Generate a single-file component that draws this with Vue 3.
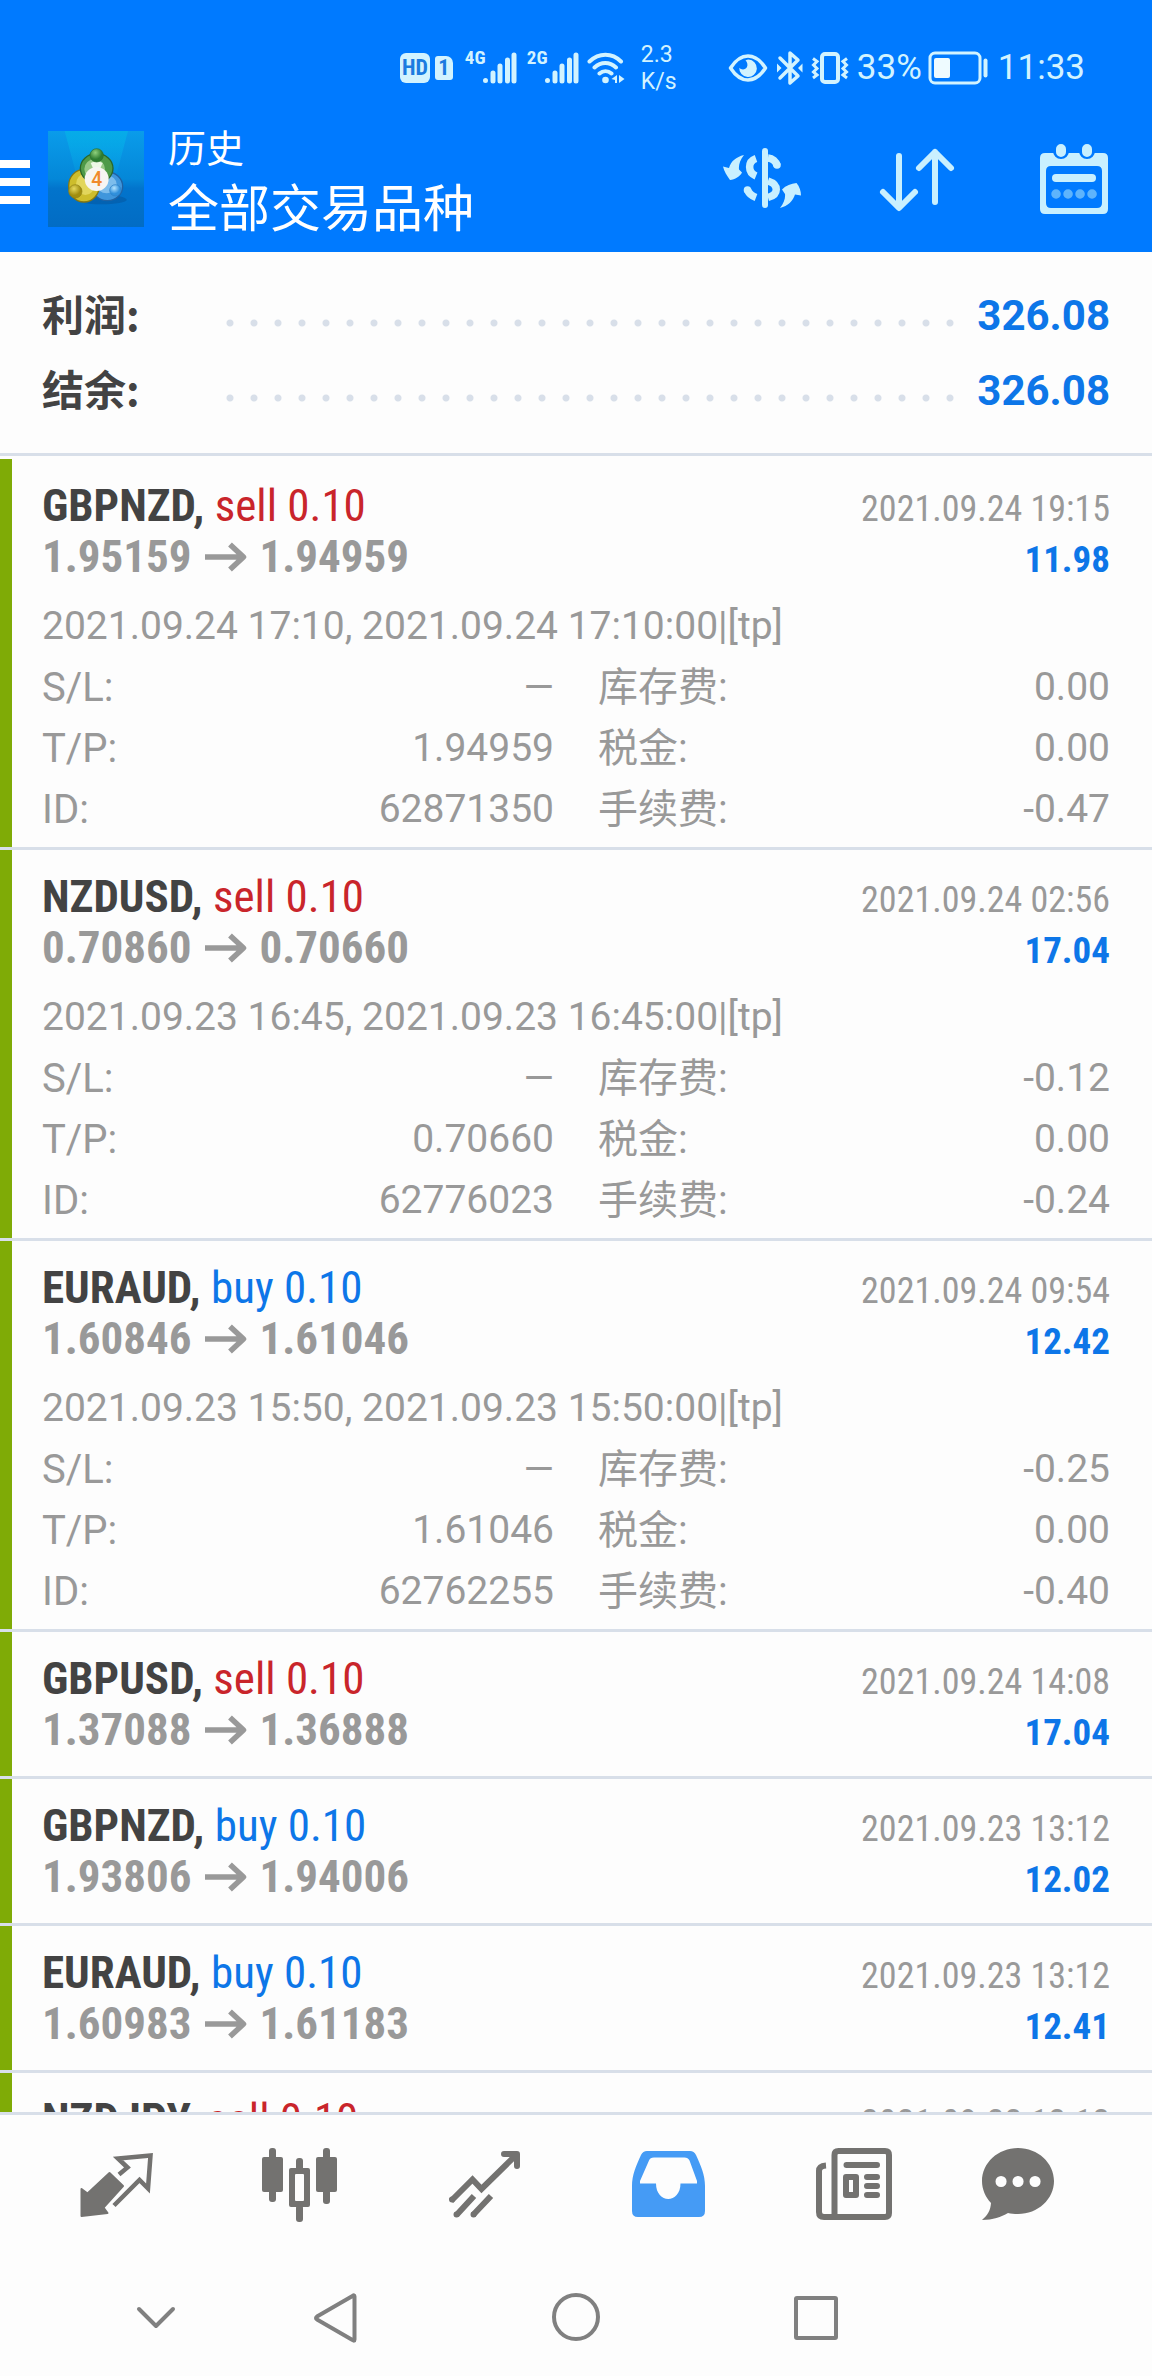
<script setup>
const summary = [
  { label: '利润:', value: '326.08' },
  { label: '结余:', value: '326.08' },
]

const deals = [
  {
    symbol: 'GBPNZD', side: 'sell', volume: '0.10', open: '1.95159', close: '1.94959',
    time: '2021.09.24 19:15', profit: '11.98',
    comment: '2021.09.24 17:10, 2021.09.24 17:10:00|[tp]',
    details: [['S/L:', '—'], ['库存费:', '0.00'], ['T/P:', '1.94959'], ['税金:', '0.00'], ['ID:', '62871350'], ['手续费:', '-0.47']],
  },
  {
    symbol: 'NZDUSD', side: 'sell', volume: '0.10', open: '0.70860', close: '0.70660',
    time: '2021.09.24 02:56', profit: '17.04',
    comment: '2021.09.23 16:45, 2021.09.23 16:45:00|[tp]',
    details: [['S/L:', '—'], ['库存费:', '-0.12'], ['T/P:', '0.70660'], ['税金:', '0.00'], ['ID:', '62776023'], ['手续费:', '-0.24']],
  },
  {
    symbol: 'EURAUD', side: 'buy', volume: '0.10', open: '1.60846', close: '1.61046',
    time: '2021.09.24 09:54', profit: '12.42',
    comment: '2021.09.23 15:50, 2021.09.23 15:50:00|[tp]',
    details: [['S/L:', '—'], ['库存费:', '-0.25'], ['T/P:', '1.61046'], ['税金:', '0.00'], ['ID:', '62762255'], ['手续费:', '-0.40']],
  },
  { symbol: 'GBPUSD', side: 'sell', volume: '0.10', open: '1.37088', close: '1.36888', time: '2021.09.24 14:08', profit: '17.04' },
  { symbol: 'GBPNZD', side: 'buy', volume: '0.10', open: '1.93806', close: '1.94006', time: '2021.09.23 13:12', profit: '12.02' },
  { symbol: 'EURAUD', side: 'buy', volume: '0.10', open: '1.60983', close: '1.61183', time: '2021.09.23 13:12', profit: '12.41' },
  { symbol: 'NZDJPY', side: 'sell', volume: '0.10', open: '77.460', close: '77.260', time: '2021.09.22 12:12', profit: '18.20' },
]
</script>

<template>
  <div class="screen">
    <header class="top">
      <div class="status">
        <span class="hd">HD</span>
        <span class="sim">1</span>
        <span class="net">4G</span>
        <svg class="bars" width="34" height="32" viewBox="0 0 34 32">
          <path d="M2.500 28.500v.1M10 21v8M17 14v15M24.500 8v21M31 3v26" />
        </svg>
        <span class="net second">2G</span>
        <svg class="bars" width="34" height="32" viewBox="0 0 34 32">
          <path d="M2.500 28.500v.1M10 21v8M17 14v15M24.500 8v21M31 3v26" />
        </svg>
        <svg class="wifi" width="38" height="32" viewBox="0 0 38 32">
          <g fill="none" stroke="#d2f3ff" stroke-width="4" stroke-linecap="round">
            <path d="M2.500 9.500C12 .5 25 .5 34 9.500M7.500 15.500c6.500-6 15-6 21.500 0M12.500 21.500c3.500-3 8.500-3 12 0" />
          </g>
          <circle cx="18.500" cy="28" r="3.300" fill="#d2f3ff" />
          <path d="M30 23v8h-2v-3l-3.500-1zM32 23v8l5.500-4z" fill="#d2f3ff" />
        </svg>
        <span class="speed">2.3<br />K/s</span>
        <svg class="eye" width="40" height="30" viewBox="0 0 40 30">
          <path d="M2.500 15C8 6.500 13.500 3 20 3s12 3.500 17.500 12C32 23.500 26.500 27 20 27S8 23.500 2.500 15z" fill="none" stroke="#d2f3ff" stroke-width="3.500" stroke-linejoin="round" />
          <path d="M20.500 6.500a8.800 8.800 0 1 1-9.200 8.200c2 2.500 6.200 2.300 7.700-.7 1-2.200.3-5.200-1.500-6.600 1-.6 2-.9 3-.9z" fill="#d2f3ff" />
        </svg>
        <svg class="bt" width="26" height="36" viewBox="0 0 26 36">
          <path d="M3 8l18 18-8 7V3l8 7L3 28" fill="none" stroke="#d2f3ff" stroke-width="3.500" stroke-linejoin="round" stroke-linecap="round" />
          <path d="M0 13.500v9l4.500-4.500zM25.500 13.500v9L21 18z" fill="#d2f3ff" />
        </svg>
        <svg class="vib" width="38" height="34" viewBox="0 0 38 34">
          <rect x="11" y="3" width="16" height="28" rx="3" fill="none" stroke="#d2f3ff" stroke-width="4" />
          <path d="M2 7.500l4 3-3.500 3.500L6 17.500 2.500 21 6 24l-4 3M36 7.500l-4 3 3.500 3.500-3.500 3.500 3.500 3.500-3.500 3 4 3" fill="none" stroke="#d2f3ff" stroke-width="3" />
        </svg>
        <span class="pct">33%</span>
        <svg class="battery" width="62" height="34" viewBox="0 0 62 34">
          <rect x="2" y="2" width="50" height="30" rx="5" fill="none" stroke="#d2f3ff" stroke-width="3" />
          <rect x="6" y="7" width="16" height="20" rx="2" fill="#eefbff" />
          <path d="M57.500 9.500v15" stroke="#d2f3ff" stroke-width="4" stroke-linecap="round" />
        </svg>
        <time class="clock">11:33</time>
      </div>

      <div class="appbar">
        <button class="menu" aria-label="菜单"><i></i><i></i><i></i></button>
        <svg class="logo" width="96" height="96" viewBox="0 0 288 288">
          <defs>
            <linearGradient id="tile" x1="0" y1="0" x2="0" y2="1">
              <stop offset="0" stop-color="#0a9cea" /><stop offset=".5" stop-color="#0487d8" /><stop offset=".6" stop-color="#0274cc" /><stop offset="1" stop-color="#026cc4" />
            </linearGradient>
            <linearGradient id="beam" x1="0" y1="0" x2="0" y2="1">
              <stop offset="0" stop-color="#06ace8" /><stop offset="1" stop-color="#06ace8" stop-opacity="0" />
            </linearGradient>
            <radialGradient id="green" cx=".4" cy=".3"><stop offset="0" stop-color="#8fd07c" /><stop offset="1" stop-color="#2f7d31" /></radialGradient>
            <radialGradient id="gold" cx=".4" cy=".3"><stop offset="0" stop-color="#e6d95e" /><stop offset="1" stop-color="#a08d10" /></radialGradient>
            <radialGradient id="blue" cx=".4" cy=".3"><stop offset="0" stop-color="#b5e4ff" /><stop offset="1" stop-color="#2f8fdb" /></radialGradient>
          </defs>
          <rect width="288" height="288" fill="url(#tile)" />
          <path d="M50 0h190l-40 150H90z" fill="url(#beam)" />
          <ellipse cx="160" cy="206" rx="76" ry="14" fill="#03549c" opacity=".5" />
          <ellipse cx="178" cy="166" rx="46" ry="43" fill="#3f96dc" stroke="#1f62a4" stroke-width="4" />
          <ellipse cx="176" cy="160" rx="30" ry="27" fill="#7dbdec" />
          <ellipse cx="108" cy="164" rx="46" ry="49" fill="#cdbd2c" stroke="#857812" stroke-width="4" />
          <ellipse cx="112" cy="160" rx="28" ry="32" fill="#e2d65c" />
          <ellipse cx="146" cy="112" rx="49" ry="44" fill="#4f9a48" stroke="#2a672a" stroke-width="4" />
          <ellipse cx="140" cy="114" rx="31" ry="30" fill="#97c987" />
          <path d="M128 96q18-10 36 0l-8 18h-20z" fill="#eef8e6" />
          <circle cx="146" cy="73" r="20" fill="url(#green)" stroke="#2b6e2e" stroke-width="2" />
          <circle cx="82" cy="181" r="20" fill="url(#gold)" stroke="#8f8115" stroke-width="2" />
          <circle cx="202" cy="178" r="17" fill="url(#blue)" stroke="#2c7fc6" stroke-width="2" />
          <circle cx="146" cy="144" r="36" fill="#f7f5f2" />
          <text x="146" y="165" text-anchor="middle" font-size="58" font-weight="500" fill="#f08a2c">4</text>
        </svg>
        <div class="titles">
          <p class="section">历史</p>
          <h1>全部交易品种</h1>
        </div>
        <button class="act" aria-label="货币">
          <svg width="80" height="80" viewBox="0 0 80 80">
            <path d="M43 13v54" stroke="#c9f0ff" stroke-width="6" stroke-linecap="round" />
            <path d="M34 20.500C25.500 23.500 25.500 34.500 34 38M46 20c4.500.5 8 3.500 9 7.500M46 43c11 3.500 11 13.500 0 16.500M25.500 52c1.500 3.500 4.500 6 8.500 7.500" fill="none" stroke="#c9f0ff" stroke-width="7.500" />
            <circle cx="55" cy="27" r="3.800" fill="#c9f0ff" /><circle cx="25.500" cy="52" r="3.800" fill="#c9f0ff" />
            <path d="M22 17c-4 5-5.500 10-5 14.500l3 3c-2 4-7 7-12 7.500C5 38 2 33 1 28.500l6 1.500C9 23 14 19 22 17zM58 70c4-5 5.500-10 5-14l-3-4.500c4-4 9-6 14.500-6.500C77.500 48.500 79 53 79 57.500l-6-1C71 63 66 68 58 70z" fill="#c9f0ff" />
          </svg>
        </button>
        <button class="act" aria-label="排序">
          <svg width="80" height="80" viewBox="0 0 80 80">
            <path d="M21 18v51M5 54l16 16 16-16M57 64V14M41 30l16-16 16 16" fill="none" stroke="#c9f0ff" stroke-width="6" stroke-linecap="round" stroke-linejoin="round" />
          </svg>
        </button>
        <button class="act" aria-label="日期">
          <svg width="80" height="80" viewBox="0 0 80 80">
            <path fill-rule="evenodd" d="M11 15h58q5 0 5 5v51q0 5-5 5H11q-5 0-5-5V20q0-5 5-5zM17 28q-5 0-5 5v32q0 5 5 5h46q5 0 5-5V33q0-5-5-5z" fill="#c9f0ff" />
            <path d="M27 11v2M53 11v2" stroke="#007aff" stroke-width="16" stroke-linecap="round" />
            <path d="M27 11v3M53 11v3" stroke="#c9f0ff" stroke-width="10" stroke-linecap="round" />
            <path d="M22 40h36" stroke="#c9f0ff" stroke-width="8" stroke-linecap="round" />
            <path d="M22 56h.1M34 56h.1M46 56h.1M58 56h.1" stroke="#5eb4fc" stroke-width="9.500" stroke-linecap="round" />
          </svg>
        </button>
      </div>
    </header>

    <dl class="summary">
      <div v-for="row in summary" :key="row.label" class="sum-row">
        <dt>{{ row.label }}</dt>
        <dd>{{ row.value }}</dd>
      </div>
    </dl>

    <ul class="deals">
      <li v-for="(deal, i) in deals" :key="i" class="deal">
        <div class="line">
          <h2>{{ deal.symbol }}, <span :class="deal.side">{{ deal.side }} {{ deal.volume }}</span></h2>
          <time>{{ deal.time }}</time>
        </div>
        <div class="line">
          <p class="prices">
            <span>{{ deal.open }}</span>
            <svg width="44" height="30" viewBox="0 0 44 30" role="img" aria-label="→">
              <path d="M1 15h38M26 2.500L39.500 15 26 27.500" fill="none" stroke="#999" stroke-width="5.500" stroke-linejoin="round" />
            </svg>
            <span>{{ deal.close }}</span>
          </p>
          <strong>{{ deal.profit }}</strong>
        </div>
        <template v-if="deal.details">
          <p class="comment">{{ deal.comment }}</p>
          <dl class="details">
            <div v-for="[label, value] in deal.details" :key="label">
              <dt>{{ label }}</dt>
              <dd>{{ value }}</dd>
            </div>
          </dl>
        </template>
      </li>
    </ul>

    <nav class="tabs">
      <button aria-label="行情">
        <svg width="80" height="80" viewBox="0 0 80 80">
          <path d="M33.500 28L47 41 27.500 62.500l4 5.500-26 3V44l6 4.500z" fill="#737270" stroke="#737270" stroke-width="2" stroke-linejoin="round" />
          <path d="M43 29.500l8.500-7-9.500-9 32.500-3L72 43.500 63.500 35 38 60.500" fill="none" stroke="#737270" stroke-width="4.500" />
        </svg>
      </button>
      <button aria-label="图表">
        <svg width="80" height="80" viewBox="0 0 80 80" fill="#737270">
          <rect x="2" y="12" width="21" height="35" rx="2" /><rect x="9" y="3" width="7" height="54" rx="3" />
          <path fill-rule="evenodd" d="M31 23h17q2 0 2 2v35q0 2-2 2H31q-2 0-2-2V25q0-2 2-2zM36 29q-1 0-1 1v25q0 1 1 1h7q1 0 1-1V30q0-1-1-1z" />
          <rect x="36" y="13" width="7" height="14" rx="3" /><rect x="36" y="60" width="7" height="17" rx="3" />
          <rect x="56" y="12" width="21" height="35" rx="2" /><rect x="63" y="3" width="7" height="56" rx="3" />
        </svg>
      </button>
      <button aria-label="交易">
        <svg width="80" height="80" viewBox="0 0 80 80" fill="none" stroke="#737270" stroke-width="6">
          <path d="M7 56l21.500-21.500 9 9.500L71 11" />
          <path d="M60 9h13v12" stroke-linecap="round" stroke-linejoin="round" />
          <path d="M30 51L12.500 70M47 51L29 70" />
          <path d="M8 54.500h.1M12.500 69.500h.1M29.500 69.500h.1" stroke-linecap="round" />
        </svg>
      </button>
      <button aria-label="历史" aria-current="page">
        <svg width="80" height="80" viewBox="0 0 80 80">
          <path fill-rule="evenodd" d="M19 6h43q4 0 6 4c5 11 9 20 9 31v25q0 6-6 6H10q-6 0-6-6V41c0-11 4-20 9-31q2-4 6-4zM26 12.500q-4 0-5 3L12 36v2.500h16c0 20.500 24.500 20.500 24.500 0H69V36l-7.500-20.500q-1.500-3-5-3z" fill="#459bf5" />
        </svg>
      </button>
      <button aria-label="新闻">
        <svg width="80" height="80" viewBox="0 0 80 80" fill="none" stroke="#737270">
          <path d="M22.500 72V10q0-4 4-4H73q4 0 4 4v58q0 4-4 4H12q-5 0-5-5V26q0-5 7-5.500" stroke-width="6" />
          <path d="M34.500 20H65M55 32h10M55 41h10M55 50h10" stroke-width="6" stroke-linecap="round" />
          <rect x="34" y="32" width="10" height="18" stroke-width="6" stroke-linejoin="round" />
        </svg>
      </button>
      <button aria-label="消息">
        <svg width="80" height="80" viewBox="0 0 80 80">
          <path d="M40 3c20 0 36 15 36 33S60 69 40 69c-4 0-7-.3-10-1-7 4-15 7-26 7 6-5 8.500-10 9-17C7.500 52 4 44.500 4 36 4 18 20 3 40 3z" fill="#737270" />
          <path d="M23 36.500h.1M40 36.500h.1M57 36.500h.1" stroke="#fdfdfd" stroke-width="11" stroke-linecap="round" />
        </svg>
      </button>
    </nav>

    <nav class="sysnav">
      <button aria-label="收起">
        <svg width="60" height="60" viewBox="0 0 60 60"><path d="M13 21l17 17 17-17" /></svg>
      </button>
      <button aria-label="返回">
        <svg width="60" height="60" viewBox="0 0 60 60"><path d="M48.500 8.500v43q0 2-2 .5L11 31.500q-2-1.500 0-3L46.500 8q2-1.500 2 .5z" /></svg>
      </button>
      <button aria-label="主页">
        <svg width="60" height="60" viewBox="0 0 60 60"><circle cx="30" cy="29" r="22" /></svg>
      </button>
      <button aria-label="最近">
        <svg width="60" height="60" viewBox="0 0 60 60"><rect x="10" y="10" width="40" height="40" rx="1" /></svg>
      </button>
    </nav>
  </div>
</template>

<style>
body {
  margin: 0;
  background: #fdfdfd;
}
</style>

<style scoped>
.screen {
  display: flex;
  flex-direction: column;
  height: 100vh;
  font-family: Roboto, "Noto Sans CJK SC", sans-serif;
  color: #999;
  background: #fdfdfd;
}
p, h1, h2, dl, dd, ul {
  margin: 0;
  padding: 0;
}
button {
  display: flex;
  align-items: center;
  justify-content: center;
  border: 0;
  padding: 0;
  background: none;
}
svg {
  display: block;
  flex: none;
}

.top {
  flex: none;
  background: #007aff;
  color: #fff;
}
.status {
  display: flex;
  align-items: center;
  justify-content: flex-end;
  height: 72px;
  padding: 32px 67px 0 0;
  color: #d2f3ff;
}
.hd, .sim {
  color: #1c7be0;
  background: #d2f3ff;
  font-family: "Roboto Condensed", "Liberation Sans Narrow", Roboto, sans-serif;
  font-weight: 700;
  font-size: 22px;
  line-height: 30px;
  text-align: center;
}
.hd {
  width: 30px;
  border-radius: 6px;
}
.sim {
  width: 18px;
  margin-left: 5px;
  line-height: 24px;
  border-radius: 3px 7px 3px 3px;
}
.net {
  align-self: flex-start;
  margin: 16px 0 0 12px;
  width: 18px;
  font-family: "Roboto Condensed", "Liberation Sans Narrow", Roboto, sans-serif;
  font-weight: 700;
  font-size: 19px;
  line-height: 20px;
}
.net.second {
  margin-left: 10px;
}
.bars {
  fill: none;
  stroke: #d2f3ff;
  stroke-width: 5;
  stroke-linecap: round;
}
.wifi {
  margin-left: 8px;
}
.speed {
  width: 48px;
  margin-left: 16px;
  font-size: 23px;
  line-height: 27px;
}
.eye {
  margin-left: 39px;
}
.bt {
  margin-left: 9px;
}
.vib {
  margin-left: 8px;
}
.pct, .clock {
  font-size: 35px;
  line-height: 40px;
}
.pct {
  margin-left: 8px;
}
.battery {
  margin-left: 6px;
}
.clock {
  margin-left: 8px;
}

.appbar {
  display: flex;
  align-items: center;
  height: 148px;
}
.menu {
  flex-direction: column;
  gap: 10px;
  width: 30px;
  padding-top: 8px;
}
.menu i {
  width: 100%;
  height: 8px;
  background: #fff;
}
.logo {
  margin: 2px 0 0 18px;
}
.titles {
  flex: 1;
  margin-left: 24px;
  padding-top: 10px;
}
.section {
  font-size: 38px;
  line-height: 54px;
}
h1 {
  font-size: 51px;
  line-height: 68px;
  font-weight: 400;
}
.act {
  width: 156px;
  height: 148px;
}

.summary {
  flex: none;
  padding: 26px 42px 25px;
  border-bottom: 3px solid #d8dfe9;
  font-size: 42px;
  line-height: 75px;
  font-weight: 700;
}
.sum-row {
  display: flex;
  height: 75px;
}
.sum-row dt {
  width: 176px;
  color: #434343;
  font-family: "Noto Sans CJK SC", sans-serif;
  line-height: 70px;
}
/* dotted leader between the label and its value */
.sum-row::before {
  content: "";
  order: 1;
  flex: 1;
  margin: 14px 18px 0 0;
  background: radial-gradient(circle, #d8dfe9 3px, transparent 4px) 0 50% / 24px 24px repeat-x;
}
.sum-row dd {
  order: 2;
  color: #0d76e8;
}

.deals {
  flex: 1;
  min-height: 0;
  padding-top: 3px;
  overflow: hidden;
  list-style: none;
}
.deal {
  padding: 21px 42px 7px;
  border-bottom: 3px solid #d8dfe9;
  background: linear-gradient(to right, #7fab06 12px, transparent 12px) padding-box;
}
.deal:not(:has(.details)) {
  padding-bottom: 21px;
}
.line {
  display: flex;
  justify-content: space-between;
  align-items: baseline;
  height: 51px;
  font-family: "Roboto Condensed", "Liberation Sans Narrow", Roboto, sans-serif;
  font-size: 45px;
  line-height: 51px;
}
h2 {
  font-size: 45px;
  font-weight: 700;
  color: #434343;
}
h2 span {
  font-weight: 400;
}
.sell {
  color: #c9252b;
}
.buy {
  color: #0d76e8;
}
.line time {
  font-size: 36px;
}
.line strong {
  font-size: 37px;
  color: #0d76e8;
}
.prices {
  display: flex;
  align-items: center;
  gap: 12px;
  font-weight: 700;
}
.comment {
  margin-top: 14px;
}
.comment, .details {
  font-size: 39px;
  line-height: 61px;
}
.details {
  display: grid;
  grid-template-columns: 1fr 1fr;
  column-gap: 44px;
}
.details div {
  display: flex;
  justify-content: space-between;
  height: 61px;
}
.details dt {
  font-size: 40px;
}

.tabs {
  flex: none;
  display: grid;
  grid-template-columns: 184fr 184fr 184fr 184fr 184fr 148fr;
  padding: 30px 60px 35px 24px;
  border-top: 3px solid #d8dfe9;
}
.sysnav {
  flex: none;
  display: grid;
  grid-template-columns: 1fr 2fr 2fr 2fr;
  height: 116px;
  padding: 0 216px 0 96px;
}
.sysnav svg {
  fill: none;
  stroke: #808080;
  stroke-width: 4;
  stroke-linecap: round;
  stroke-linejoin: round;
}
</style>
